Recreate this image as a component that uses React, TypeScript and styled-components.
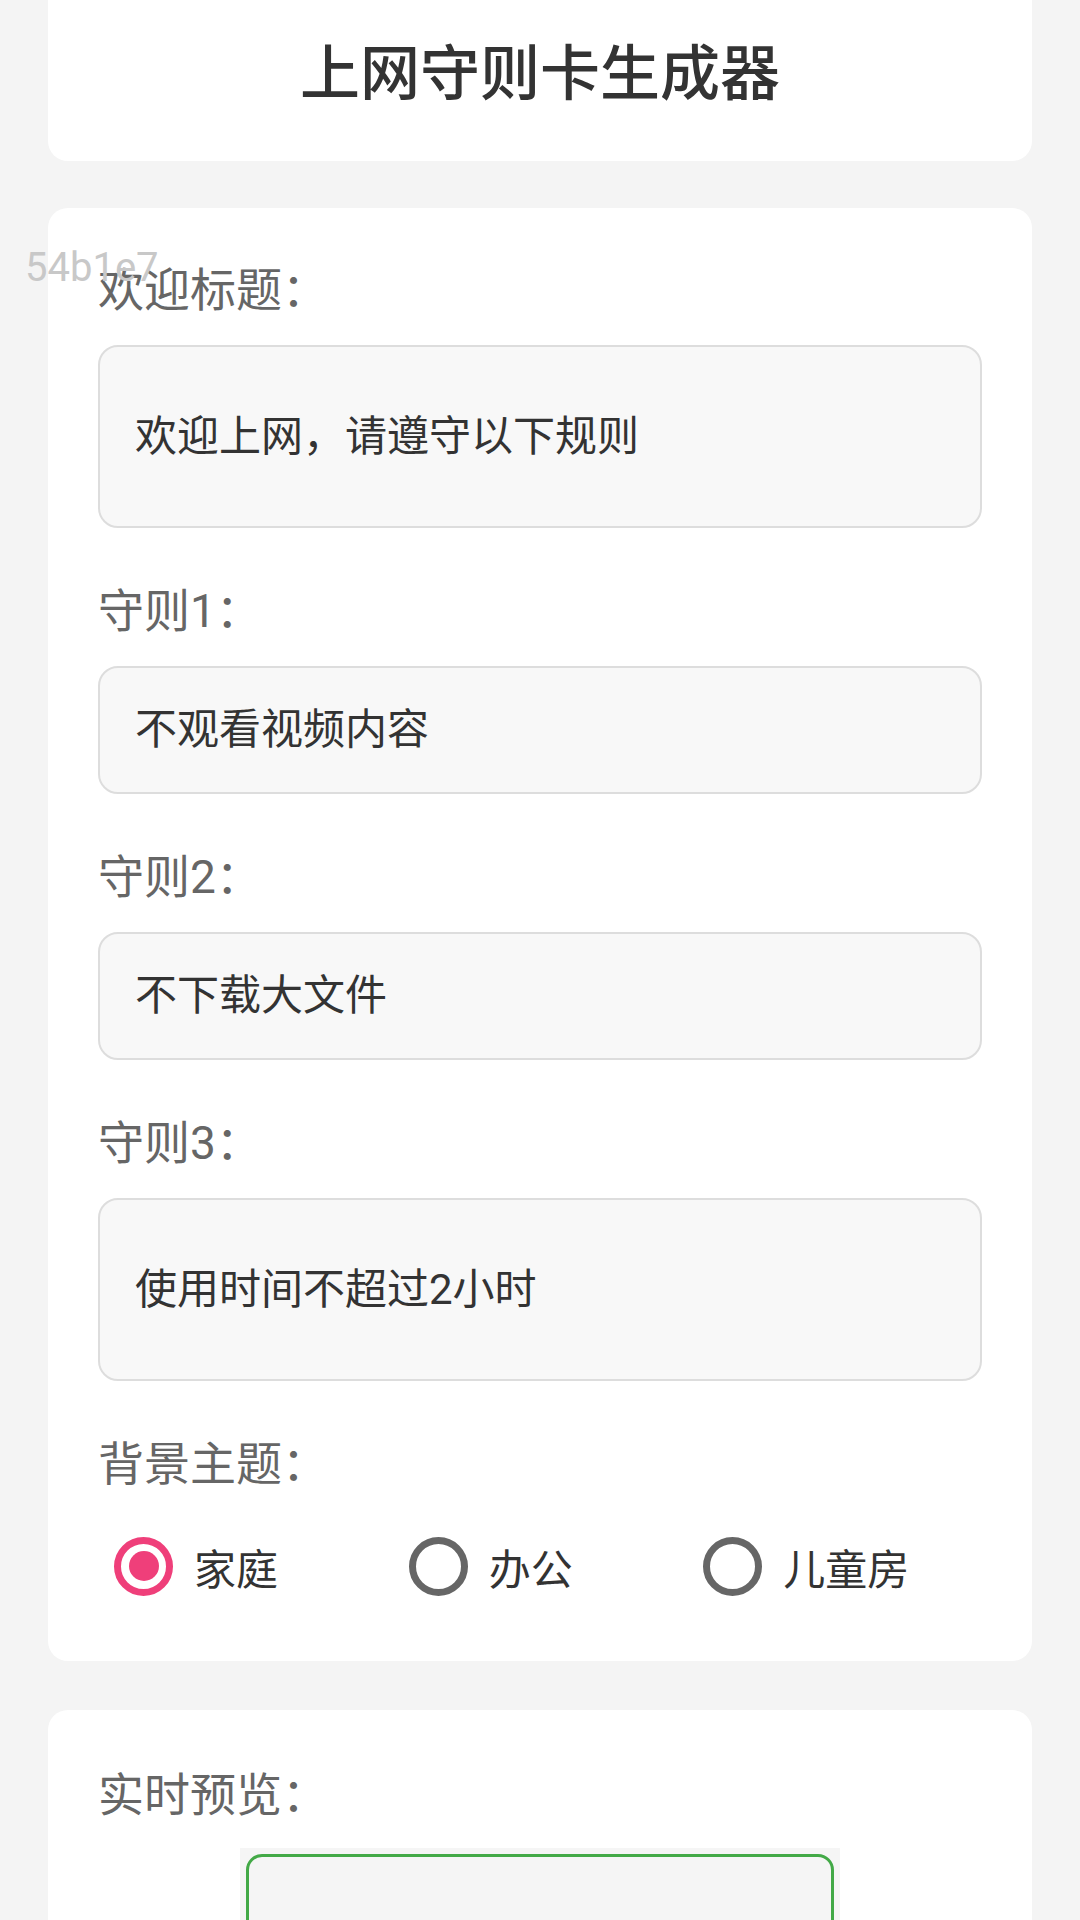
import React, { useState } from "react";
import styled, { createGlobalStyle } from "styled-components";

const GlobalStyle = createGlobalStyle`
  html, body {
    margin: 0;
    padding: 0;
    background: #f4f4f4;
    font-family: Roboto, "Noto Sans CJK SC", sans-serif;
  }
`;

interface FieldProps {
  tall?: boolean
}

interface RadioProps {
  checked: boolean
}

const THEMES = ["家庭", "办公", "儿童房"];

const App: React.FC = (): React.ReactElement => {
  const [welcome, setWelcome] = useState("欢迎上网，请遵守以下规则");
  const [rules, setRules] = useState(["不观看视频内容", "不下载大文件", "使用时间不超过2小时"]);
  const [theme, setTheme] = useState(THEMES[0]);

  const updateRule = (index: number, value: string) => {
    setRules(rules.map((rule, i) => (i === index ? value : rule)));
  };

  return (
    <Page>
      <GlobalStyle />
      <Watermark>54b1e7</Watermark>
      <HeaderCard>
        <Title>上网守则卡生成器</Title>
      </HeaderCard>

      <Card>
        <FieldGroup>
          <Label>欢迎标题：</Label>
          <TextBox tall>
            <FieldInput value={welcome} onChange={(e) => setWelcome(e.target.value)} />
          </TextBox>
        </FieldGroup>
        {rules.map((rule, i) => (
          <FieldGroup key={i}>
            <Label>{`守则${i + 1}：`}</Label>
            <TextBox tall={i === 2}>
              <FieldInput value={rule} onChange={(e) => updateRule(i, e.target.value)} />
            </TextBox>
          </FieldGroup>
        ))}
        <Label>背景主题：</Label>
        <RadioRow>
          {THEMES.map((name) => (
            <RadioItem key={name} onClick={() => setTheme(name)}>
              <RadioCircle checked={theme === name} />
              <RadioText>{name}</RadioText>
            </RadioItem>
          ))}
        </RadioRow>
      </Card>

      <PreviewSection>
        <Label>实时预览：</Label>
        <PreviewFrame>
          <PreviewCard>
            <PreviewTitle>{welcome}</PreviewTitle>
            {rules.map((rule, i) => (
              <PreviewRule key={i}>{`${i + 1}. ${rule}`}</PreviewRule>
            ))}
          </PreviewCard>
        </PreviewFrame>
      </PreviewSection>
    </Page>
  );
};

const Page = styled.div`
  position: relative;
  display: flex;
  flex-direction: column;
  gap: 47px;
  padding: 0 48px 60px;
  overflow: hidden;
`;

const Watermark = styled.div`
  position: absolute;
  left: 25px;
  top: 248px;
  font-family: Roboto, sans-serif;
  font-size: 40px;
  line-height: 1;
  color: #c8c8c8;
  z-index: 2;
  pointer-events: none;
`;

const HeaderCard = styled.header`
  margin-top: -40px;
  padding: 80px 0 51px;
  background: #ffffff;
  border-radius: 20px;
  text-align: center;
`;

const Title = styled.h1`
  margin: 0;
  font-size: 60px;
  line-height: 70px;
  font-weight: 500;
  color: #333333;
`;

const Card = styled.section`
  display: flex;
  flex-direction: column;
  padding: 48px 50px;
  background: #ffffff;
  border-radius: 20px;
`;

const PreviewSection = styled(Card)`
  margin-top: 2px;
  padding-top: 51px;
`;

const FieldGroup = styled.div`
  display: flex;
  flex-direction: column;
  margin-bottom: 49px;
`;

const Label = styled.div`
  font-size: 46px;
  line-height: 69px;
  color: #666666;
  margin-bottom: 20px;
`;

const TextBox = styled.div<FieldProps>`
  display: flex;
  align-items: center;
  height: ${({ tall }) => (tall ? 183 : 128)}px;
  box-sizing: border-box;
  padding: 0 35px;
  background: #f8f8f8;
  border: 2px solid #dddddd;
  border-radius: 20px;
`;

const FieldInput = styled.input`
  width: 100%;
  border: none;
  outline: none;
  background: transparent;
  padding: 0;
  font-family: Roboto, "Noto Sans CJK SC", sans-serif;
  font-size: 42px;
  line-height: 56px;
  color: #333333;
`;

const RadioRow = styled.div`
  display: grid;
  grid-template-columns: repeat(3, 1fr);
  height: 94px;
`;

const RadioItem = styled.label`
  display: flex;
  align-items: center;
  gap: 21px;
  padding-left: 16px;
  cursor: pointer;
`;

const RadioCircle = styled.span<RadioProps>`
  position: relative;
  width: 59px;
  height: 59px;
  box-sizing: border-box;
  border-radius: 50%;
  border: 7px solid ${({ checked }) => (checked ? "#ef3f7a" : "#666666")};
  flex-shrink: 0;

  &::after {
    content: "";
    position: absolute;
    left: 50%;
    top: 50%;
    width: 30px;
    height: 30px;
    margin: -15px 0 0 -15px;
    border-radius: 50%;
    background: #ef3f7a;
    display: ${({ checked }) => (checked ? "block" : "none")};
  }
`;

const RadioText = styled.span`
  font-size: 42px;
  color: #333333;
`;

const PreviewFrame = styled.div`
  align-self: center;
  width: 600px;
  box-sizing: border-box;
  margin-top: -2px;
  padding: 6px 6px 20px;
  background: #f5f5f5;
`;

const PreviewCard = styled.div`
  padding: 100px 40px 60px;
  border: 3px solid #43a947;
  border-radius: 16px;
  background: #f5f5f5;
`;

const PreviewTitle = styled.div`
  font-size: 40px;
  color: #333333;
  text-align: center;
  margin-bottom: 24px;
`;

const PreviewRule = styled.div`
  font-size: 34px;
  line-height: 1.6;
  color: #444444;
`;

export default App;
